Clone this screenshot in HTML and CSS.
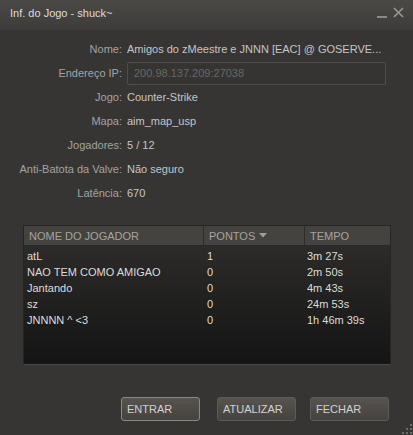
FILE: index.html
```html
<!DOCTYPE html>
<html lang="pt">
<head>
<meta charset="utf-8">
<link rel="stylesheet" href="styles.css">
</head>
<body>
<div class="win">
  <div class="titlebar">
    <span class="title">Inf. do Jogo - shuck~</span>
    <span class="ctrls">
      <svg class="min" width="10" height="10" viewBox="0 0 10 10"><rect x="0" y="8" width="10" height="2" fill="#8c8a87"/></svg>
      <svg class="close" width="11" height="11" viewBox="0 0 11 11"><path d="M1 1 L10 10 M10 1 L1 10" stroke="#9a9895" stroke-width="1.6"/></svg>
    </span>
  </div>
  <div class="info">
    <div class="lbl">Nome:</div><div class="val">Amigos do zMeestre e JNNN [EAC] @ GOSERVE...</div>
    <div class="lbl">Endereço IP:</div><div class="val"><div class="ipbox">200.98.137.209:27038</div></div>
    <div class="lbl">Jogo:</div><div class="val">Counter-Strike</div>
    <div class="lbl">Mapa:</div><div class="val">aim_map_usp</div>
    <div class="lbl">Jogadores:</div><div class="val">5 / 12</div>
    <div class="lbl">Anti-Batota da Valve:</div><div class="val">Não seguro</div>
    <div class="lbl">Latência:</div><div class="val">670</div>
  </div>
  <div class="table">
    <div class="thead">
      <div class="th c1">NOME DO JOGADOR</div>
      <div class="th c2">PONTOS <svg width="8" height="5" viewBox="0 0 8 5"><path d="M0 0 H8 L4 4.5 Z" fill="#a09e9b"/></svg></div>
      <div class="th c3">TEMPO</div>
    </div>
    <div class="tbody">
      <div class="tr"><span class="c1">atL</span><span class="c2">1</span><span class="c3">3m 27s</span></div>
      <div class="tr"><span class="c1">NAO TEM COMO AMIGAO</span><span class="c2">0</span><span class="c3">2m 50s</span></div>
      <div class="tr"><span class="c1">Jantando</span><span class="c2">0</span><span class="c3">4m 43s</span></div>
      <div class="tr"><span class="c1">sz</span><span class="c2">0</span><span class="c3">24m 53s</span></div>
      <div class="tr"><span class="c1">JNNNN ^ &lt;3</span><span class="c2">0</span><span class="c3">1h 46m 39s</span></div>
    </div>
  </div>
  <div class="buttons">
    <button class="btn focus">ENTRAR</button>
    <button class="btn">ATUALIZAR</button>
    <button class="btn">FECHAR</button>
  </div>
  <svg class="grip" width="10" height="10" viewBox="0 0 10 10">
    <g fill="#6e6c69">
      <rect x="8" y="0" width="2" height="2"/>
      <rect x="4" y="4" width="2" height="2"/><rect x="8" y="4" width="2" height="2"/>
      <rect x="0" y="8" width="2" height="2"/><rect x="4" y="8" width="2" height="2"/><rect x="8" y="8" width="2" height="2"/>
    </g>
  </svg>
</div>
</body>
</html>
```
FILE: styles.css
```css
* { box-sizing: border-box; }
html, body { margin: 0; padding: 0; }
body {
  width: 413px;
  height: 435px;
  overflow: hidden;
  background: #363533;
  font-family: "Liberation Sans", Arial, sans-serif;
  font-size: 11px;
}
.win {
  position: relative;
  width: 413px;
  height: 435px;
  background: #363533;
  display: flex;
  flex-direction: column;
}
.titlebar {
  height: 30px;
  background: linear-gradient(#4b4946, #3e3c3a);
  display: flex;
  align-items: center;
  justify-content: space-between;
  padding: 0 9px 0 10px;
}
.title {
  color: #dcdcdc;
  font-size: 11px;
  margin-top: -4px;
}
.ctrls {
  display: flex;
  align-items: flex-end;
  gap: 6px;
  margin-top: -5px;
}
.info {
  display: grid;
  grid-template-columns: 122px 1fr;
  grid-auto-rows: 24px;
  column-gap: 5px;
  align-items: center;
  padding: 7px 27px 0 0;
}
.lbl {
  text-align: right;
  color: #a3a3a3;
}
.val {
  color: #c5c5c5;
  white-space: nowrap;
}
.ipbox {
  height: 23px;
  border: 1px solid #4e4d4b;
  border-radius: 2px;
  background: #353432;
  color: #696866;
  padding: 0 6px;
  display: flex;
  align-items: center;
}
.table {
  margin: 20px 0 0 23px;
  width: 368px;
  height: 140px;
  border: 1px solid #262523;
  border-bottom-color: #4a4947;
  display: flex;
  flex-direction: column;
}
.thead {
  height: 20px;
  background: #444340;
  display: flex;
  border-bottom: 1px solid #2a2927;
}
.th {
  color: #a5a39f;
  font-size: 11px;
  display: flex;
  align-items: center;
  gap: 4px;
  padding-left: 5px;
}
.th.c2, .th.c3 { border-left: 1px solid #2e2d2b; }
.c1 { width: 179px; }
.c2 { width: 101px; }
.c3 { flex: 1; }
.tbody {
  flex: 1;
  background: linear-gradient(#2c2b29, #141414);
  padding-top: 2px;
}
.tr {
  height: 16px;
  display: flex;
  align-items: center;
  color: #dcdcdc;
  white-space: nowrap;
}
.tr .c1 { padding-left: 3px; }
.tr .c2 { padding-left: 4px; }
.tr .c3 { padding-left: 3px; }
.buttons {
  margin: 32px 0 0 121px;
  display: flex;
  gap: 17px;
}
.btn {
  width: 79px;
  height: 24px;
  border: 1px solid #5d5b58;
  border-radius: 3px;
  background: linear-gradient(#57544f, #45423f);
  color: #d2d2d2;
  font-family: "Liberation Sans", Arial, sans-serif;
  font-size: 11px;
  text-align: left;
  padding: 0 0 0 5px;
}
.btn + .btn + .btn { margin-left: -3px; }
.btn.focus { border-color: #8a8784; }
.grip {
  position: absolute;
  right: 1px;
  bottom: 1px;
}
```
